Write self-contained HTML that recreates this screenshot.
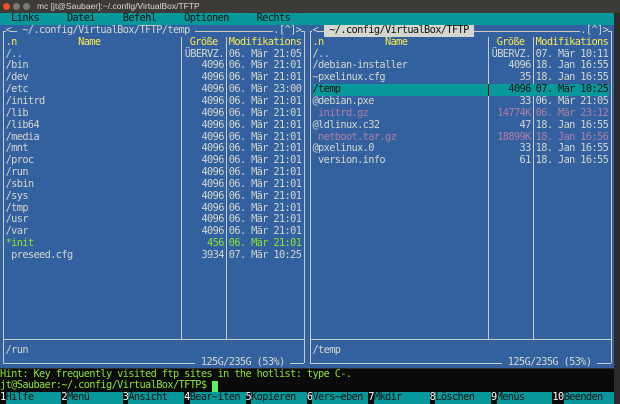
<!DOCTYPE html>
<html><head><meta charset="utf-8"><style>
*{margin:0;padding:0;box-sizing:border-box}
body{width:620px;height:404px;overflow:hidden;background:#2c2c2c;position:relative;font-family:"DejaVu Sans Mono","Liberation Mono",monospace;font-size:10.3px;letter-spacing:-0.62px;color:#d3d7cf}
.t{position:absolute;white-space:pre;height:11.85px;line-height:11.85px;top:calc(13px + var(--r)*11.85px);left:calc(var(--c)*5.58px)}
.s{width:39.66px;text-align:right}
.y{color:#fce94f}.g{color:#8ae234}.p{color:#ad7fa8}
.bl{background:#33609e}
.h{position:absolute;height:1px;background:#c8ccc4}
.v{position:absolute;width:1px;background:#c8ccc4}
</style></head><body>
<div style="position:absolute;left:0;top:0;width:620px;height:13px;background:#3c3b37"></div>
<div style="position:absolute;left:3px;top:3px;width:7px;height:7px;border-radius:50%;background:#e95420"></div>
<div style="position:absolute;left:13px;top:3px;width:7px;height:7px;border-radius:50%;background:#7a7974"></div>
<div style="position:absolute;left:23px;top:3px;width:7px;height:7px;border-radius:50%;background:#7a7974"></div>
<div style="position:absolute;left:37px;top:1px;font-family:'Liberation Sans',sans-serif;font-size:8.5px;letter-spacing:0;color:#dfdbd2;line-height:11px">mc [jt@Saubaer]:~/.config/VirtualBox/TFTP</div>
<div style="position:absolute;left:0;top:13px;width:614px;height:11.85px;background:#06989a"></div>
<div style="position:absolute;left:0;top:24.85px;width:614px;height:343.65px;background:#33609e"></div>
<div style="position:absolute;left:0;top:368.5px;width:614px;height:23.7px;background:#0a0a0a"></div>
<div style="position:absolute;left:0;top:392.2px;width:614px;height:11.8px;background:#0a0a0a"></div>
<div class="t" style="--r:0;--c:2;color:#111">Links</div>
<div class="t" style="--r:0;--c:12;color:#111">Datei</div>
<div class="t" style="--r:0;--c:22;color:#111">Befehl</div>
<div class="t" style="--r:0;--c:33;color:#111">Optionen</div>
<div class="t" style="--r:0;--c:46;color:#111">Rechts</div>
<div class="h" style="left:3px;top:30.5px;width:301px"></div>
<div class="h" style="left:310px;top:30.5px;width:301px"></div>
<div class="h" style="left:3px;top:338.5px;width:301px"></div>
<div class="h" style="left:310px;top:338.5px;width:301px"></div>
<div class="h" style="left:3px;top:362.5px;width:301px"></div>
<div class="h" style="left:310px;top:362.5px;width:301px"></div>
<div class="v" style="left:3px;top:30.5px;height:332px"></div>
<div class="v" style="left:304px;top:30.5px;height:332px"></div>
<div class="v" style="left:310px;top:30.5px;height:332px"></div>
<div class="v" style="left:611px;top:30.5px;height:332px"></div>
<div class="v" style="left:181px;top:36.7px;height:302px"></div>
<div class="v" style="left:226px;top:36.7px;height:302px"></div>
<div class="v" style="left:488px;top:36.7px;height:302px"></div>
<div class="v" style="left:533px;top:36.7px;height:302px"></div>
<div class="t bl" style="--r:1;--c:1">&lt;</div>
<div class="t bl" style="--r:1;--c:3"> ~/.config/VirtualBox/TFTP/temp </div>
<div class="t bl" style="--r:1;--c:49">.[^]&gt;</div>
<div class="t bl" style="--r:1;--c:56">&lt;</div>
<div class="t" style="--r:1;--c:58;background:#d3d7cf;color:#111"> ~/.config/VirtualBox/TFTP </div>
<div class="t bl" style="--r:1;--c:104">.[^]&gt;</div>
<div class="t y" style="--r:2;--c:1">.n</div><div class="t y" style="--r:2;--c:14">Name</div><div class="t y" style="--r:2;--c:34">Größe</div><div class="t y" style="--r:2;--c:41">Modifikations</div>
<div class="t y" style="--r:2;--c:56">.n</div><div class="t y" style="--r:2;--c:69">Name</div><div class="t y" style="--r:2;--c:89">Größe</div><div class="t y" style="--r:2;--c:96">Modifikations</div>
<div class="t" style="--r:3;--c:1">/..</div><div class="t s" style="--r:3;--c:33">ÜBERVZ.</div><div class="t" style="--r:3;--c:41">06. Mär 21:05</div>
<div class="t" style="--r:4;--c:1">/bin</div><div class="t s" style="--r:4;--c:33">4096</div><div class="t" style="--r:4;--c:41">06. Mär 21:01</div>
<div class="t" style="--r:5;--c:1">/dev</div><div class="t s" style="--r:5;--c:33">4096</div><div class="t" style="--r:5;--c:41">06. Mär 21:01</div>
<div class="t" style="--r:6;--c:1">/etc</div><div class="t s" style="--r:6;--c:33">4096</div><div class="t" style="--r:6;--c:41">06. Mär 23:00</div>
<div class="t" style="--r:7;--c:1">/initrd</div><div class="t s" style="--r:7;--c:33">4096</div><div class="t" style="--r:7;--c:41">06. Mär 21:01</div>
<div class="t" style="--r:8;--c:1">/lib</div><div class="t s" style="--r:8;--c:33">4096</div><div class="t" style="--r:8;--c:41">06. Mär 21:01</div>
<div class="t" style="--r:9;--c:1">/lib64</div><div class="t s" style="--r:9;--c:33">4096</div><div class="t" style="--r:9;--c:41">06. Mär 21:01</div>
<div class="t" style="--r:10;--c:1">/media</div><div class="t s" style="--r:10;--c:33">4096</div><div class="t" style="--r:10;--c:41">06. Mär 21:01</div>
<div class="t" style="--r:11;--c:1">/mnt</div><div class="t s" style="--r:11;--c:33">4096</div><div class="t" style="--r:11;--c:41">06. Mär 21:01</div>
<div class="t" style="--r:12;--c:1">/proc</div><div class="t s" style="--r:12;--c:33">4096</div><div class="t" style="--r:12;--c:41">06. Mär 21:01</div>
<div class="t" style="--r:13;--c:1">/run</div><div class="t s" style="--r:13;--c:33">4096</div><div class="t" style="--r:13;--c:41">06. Mär 21:01</div>
<div class="t" style="--r:14;--c:1">/sbin</div><div class="t s" style="--r:14;--c:33">4096</div><div class="t" style="--r:14;--c:41">06. Mär 21:01</div>
<div class="t" style="--r:15;--c:1">/sys</div><div class="t s" style="--r:15;--c:33">4096</div><div class="t" style="--r:15;--c:41">06. Mär 21:01</div>
<div class="t" style="--r:16;--c:1">/tmp</div><div class="t s" style="--r:16;--c:33">4096</div><div class="t" style="--r:16;--c:41">06. Mär 21:01</div>
<div class="t" style="--r:17;--c:1">/usr</div><div class="t s" style="--r:17;--c:33">4096</div><div class="t" style="--r:17;--c:41">06. Mär 21:01</div>
<div class="t" style="--r:18;--c:1">/var</div><div class="t s" style="--r:18;--c:33">4096</div><div class="t" style="--r:18;--c:41">06. Mär 21:01</div>
<div class="t g" style="--r:19;--c:1">*init</div><div class="t s g" style="--r:19;--c:33">456</div><div class="t g" style="--r:19;--c:41">06. Mär 21:01</div>
<div class="t" style="--r:20;--c:1"> preseed.cfg</div><div class="t s" style="--r:20;--c:33">3934</div><div class="t" style="--r:20;--c:41">07. Mär 10:25</div>
<div class="t" style="--r:3;--c:56">/..</div><div class="t s" style="--r:3;--c:88">ÜBERVZ.</div><div class="t" style="--r:3;--c:96">07. Mär 10:11</div>
<div class="t" style="--r:4;--c:56">/debian-installer</div><div class="t s" style="--r:4;--c:88">4096</div><div class="t" style="--r:4;--c:96">18. Jan 16:55</div>
<div class="t" style="--r:5;--c:56">~pxelinux.cfg</div><div class="t s" style="--r:5;--c:88">35</div><div class="t" style="--r:5;--c:96">18. Jan 16:55</div>
<div style="position:absolute;left:312.5px;top:84.1px;width:296px;height:11.85px;background:#06989a"></div>
<div class="v" style="left:488px;top:84.1px;height:11.85px;background:#111"></div>
<div class="t" style="--r:6;--c:56;color:#111">/temp</div><div class="t s" style="--r:6;--c:88;color:#111">4096</div><div class="t" style="--r:6;--c:96;color:#111">07. Mär 10:25</div>
<div class="t" style="--r:7;--c:56">@debian.pxe</div><div class="t s" style="--r:7;--c:88">33</div><div class="t" style="--r:7;--c:96">06. Mär 21:05</div>
<div class="t p" style="--r:8;--c:56"> initrd.gz</div><div class="t s p" style="--r:8;--c:88">14774K</div><div class="t p" style="--r:8;--c:96">06. Mär 23:12</div>
<div class="t" style="--r:9;--c:56">@ldlinux.c32</div><div class="t s" style="--r:9;--c:88">47</div><div class="t" style="--r:9;--c:96">18. Jan 16:55</div>
<div class="t p" style="--r:10;--c:56"> netboot.tar.gz</div><div class="t s p" style="--r:10;--c:88">18899K</div><div class="t p" style="--r:10;--c:96">18. Jan 16:56</div>
<div class="t" style="--r:11;--c:56">@pxelinux.0</div><div class="t s" style="--r:11;--c:88">33</div><div class="t" style="--r:11;--c:96">18. Jan 16:55</div>
<div class="t" style="--r:12;--c:56"> version.info</div><div class="t s" style="--r:12;--c:88">61</div><div class="t" style="--r:12;--c:96">18. Jan 16:55</div>
<div class="t" style="--r:28;--c:1">/run</div>
<div class="t" style="--r:28;--c:56">/temp</div>
<div class="t bl" style="--r:29;--c:35"> 125G/235G (53%) </div>
<div class="t bl" style="--r:29;--c:90"> 125G/235G (53%) </div>
<div class="t g" style="--r:30;--c:0">Hint: Key frequently visited ftp sites in the hotlist: type C-.</div>
<div class="t g" style="--r:31;--c:0">jt@Saubaer:~/.config/VirtualBox/TFTP$ </div>
<div style="position:absolute;left:212px;top:381px;width:5.6px;height:10.5px;background:#5ff05f"></div>
<div class="t" style="--r:32;--c:0;color:#fff">1</div><div class="t" style="--r:32;--c:1;width:55.8px;background:#06989a;color:#111">Hilfe</div>
<div class="t" style="--r:32;--c:11;color:#fff">2</div><div class="t" style="--r:32;--c:12;width:55.8px;background:#06989a;color:#111">Menü</div>
<div class="t" style="--r:32;--c:22;color:#fff">3</div><div class="t" style="--r:32;--c:23;width:55.8px;background:#06989a;color:#111">Ansicht</div>
<div class="t" style="--r:32;--c:33;color:#fff">4</div><div class="t" style="--r:32;--c:34;width:55.8px;background:#06989a;color:#111">Bear~iten</div>
<div class="t" style="--r:32;--c:44;color:#fff">5</div><div class="t" style="--r:32;--c:45;width:55.8px;background:#06989a;color:#111">Kopieren</div>
<div class="t" style="--r:32;--c:55;color:#fff">6</div><div class="t" style="--r:32;--c:56;width:55.8px;background:#06989a;color:#111">Vers~eben</div>
<div class="t" style="--r:32;--c:66;color:#fff">7</div><div class="t" style="--r:32;--c:67;width:55.8px;background:#06989a;color:#111">Mkdir</div>
<div class="t" style="--r:32;--c:77;color:#fff">8</div><div class="t" style="--r:32;--c:78;width:55.8px;background:#06989a;color:#111">Löschen</div>
<div class="t" style="--r:32;--c:88;color:#fff">9</div><div class="t" style="--r:32;--c:89;width:55.8px;background:#06989a;color:#111">Menüs</div>
<div class="t" style="--r:32;--c:99;color:#fff">10</div><div class="t" style="--r:32;--c:101;width:50.2px;background:#06989a;color:#111">Beenden</div>
</body></html>
